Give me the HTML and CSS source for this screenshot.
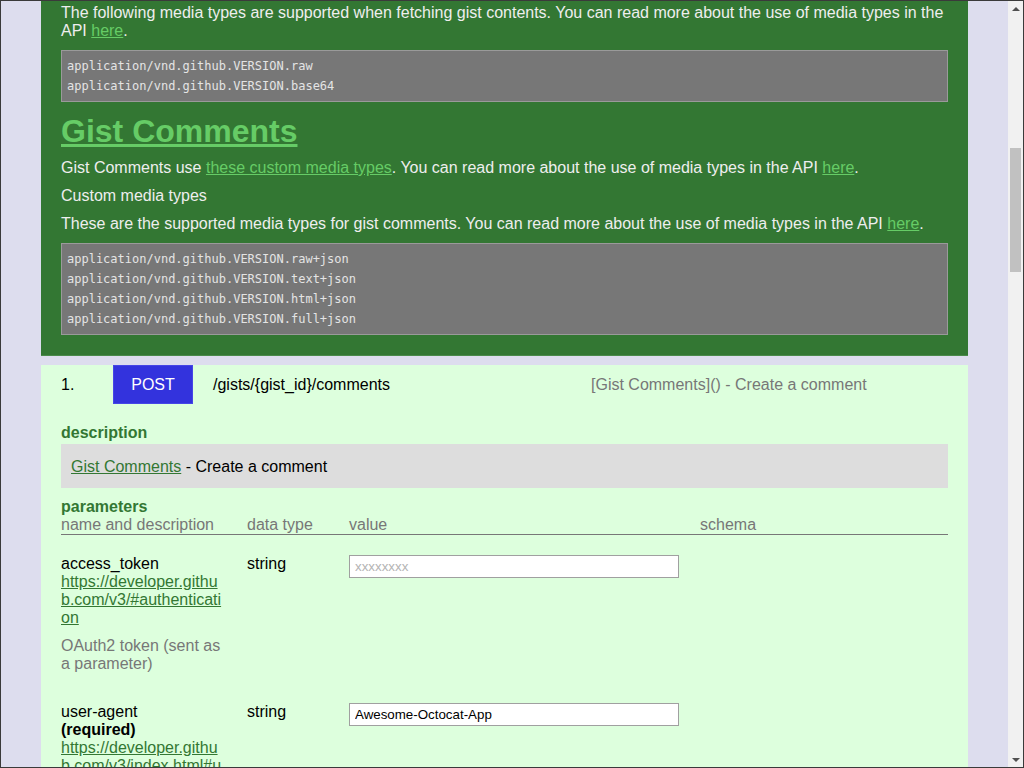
FILE: index.html
```html
<!DOCTYPE html>
<html lang="en">
<head>
<meta charset="utf-8">
<title>Gist Comments</title>
<link rel="stylesheet" href="styles.css">
</head>
<body>
<div class="page">
  <section class="media">
    <p>The following media types are supported when fetching gist contents. You can read more about the use of media types in the API <a href="#">here</a>.</p>
    <pre class="code">application/vnd.github.VERSION.raw
application/vnd.github.VERSION.base64</pre>
    <h2 class="title"><a href="#">Gist Comments</a></h2>
    <p>Gist Comments use <a href="#">these custom media types</a>. You can read more about the use of media types in the API <a href="#">here</a>.</p>
    <p>Custom media types</p>
    <p>These are the supported media types for gist comments. You can read more about the use of media types in the API <a href="#">here</a>.</p>
    <pre class="code">application/vnd.github.VERSION.raw+json
application/vnd.github.VERSION.text+json
application/vnd.github.VERSION.html+json
application/vnd.github.VERSION.full+json</pre>
  </section>

  <section class="endpoint">
    <div class="op-row">
      <span class="op-num">1.</span>
      <span class="op-method">POST</span>
      <span class="op-path">/gists/{gist_id}/comments</span>
      <span class="op-summary">[Gist Comments]() - Create a comment</span>
    </div>

    <h4 class="label">description</h4>
    <div class="desc-box"><a href="#">Gist Comments</a> - Create a comment</div>

    <h4 class="label label-params">parameters</h4>
    <div class="params">
      <div class="param-row param-head">
        <div class="cell cell-name">name and description</div>
        <div class="cell">data type</div>
        <div class="cell">value</div>
        <div class="cell">schema</div>
      </div>

      <div class="param-row">
        <div class="cell cell-name">
          <div>access_token</div>
          <a class="doc-link" href="#">https://developer.github.com/v3/#authentication</a>
          <p class="param-desc">OAuth2 token (sent as a parameter)</p>
        </div>
        <div class="cell">string</div>
        <div class="cell"><input class="field" type="text" placeholder="xxxxxxxx"></div>
        <div class="cell"></div>
      </div>

      <div class="param-row">
        <div class="cell cell-name">
          <div>user-agent</div>
          <div class="req">(required)</div>
          <a class="doc-link" href="#">https://developer.github.com/v3/index.html#user-agent-required</a>
        </div>
        <div class="cell">string</div>
        <div class="cell"><input class="field" type="text" value="Awesome-Octocat-App"></div>
        <div class="cell"></div>
      </div>
    </div>
  </section>
</div>

<div class="scrollbar" aria-hidden="true">
  <div class="sb-button"><span class="sb-arrow sb-up"></span></div>
  <div class="sb-track"><div class="sb-thumb"></div></div>
  <div class="sb-button"><span class="sb-arrow sb-down"></span></div>
</div>
</body>
</html>
```

FILE: styles.css
```css
html {
  height: 100%;
  overflow: hidden;
}

body {
  margin: 0;
  height: 100%;
  box-sizing: border-box;
  border: 1px solid #3a3a3a;
  overflow: hidden;
  background: #ddddee;
  font-family: "Liberation Sans", Arial, sans-serif;
  font-size: 16px;
  line-height: 18px;
  color: #000;
}

.page {
  margin: 0 55px 0 40px;
}

/* dark green media-types section */
.media {
  background: #337733;
  color: #eeeeee;
  padding: 3px 20px 20px;
  border-bottom: 1px solid #4a8a4a;
  margin-bottom: 9px;
}

.media p {
  margin: 0 0 10px;
}

.media a {
  color: #66cc66;
}

.code {
  margin: 0 0 11px;
  padding: 5px;
  background: #777777;
  border: 1px solid #9a9a9a;
  color: #e4e4e4;
  font-family: "DejaVu Sans Mono", "Liberation Mono", monospace;
  font-size: 12px;
  line-height: 20px;
  white-space: pre;
}

.media .code:last-child {
  margin-bottom: 0;
}

.title {
  margin: 0 0 9px;
  font-size: 32px;
  line-height: 37px;
  font-weight: bold;
}

.title a {
  color: #66cc66;
}

/* light green endpoint section */
.endpoint {
  background: #ddffdd;
  padding: 0 20px 20px;
}

.op-row {
  display: flex;
  align-items: center;
  margin-bottom: 20px;
}

.op-num {
  width: 52px;
}

.op-method {
  width: 80px;
  box-sizing: border-box;
  padding: 10px 0 9px;
  border: 1px solid #4646e6;
  background: #3333dd;
  color: #ffffff;
  text-align: center;
  margin-right: 20px;
}

.op-path {
  width: 378px;
}

.op-summary {
  color: #777777;
}

.label {
  margin: 10px 0 0;
  font-size: 16px;
  line-height: 18px;
  font-weight: bold;
  color: #337733;
}

.desc-box {
  margin-top: 2px;
  background: #dddddd;
  padding: 11px 10px 9px;
  line-height: 24px;
}

.endpoint a {
  color: #337733;
}

.param-row {
  display: grid;
  grid-template-columns: 186px 102px 351px 1fr;
}

.param-head {
  color: #777777;
  border-bottom: 1px solid #777777;
}

.param-row + .param-row {
  padding-top: 20px;
}

.cell-name {
  padding-right: 22px;
}

.doc-link {
  display: block;
  word-break: break-all;
}

.param-desc {
  margin: 10px 0;
  color: #777777;
}

.req {
  font-weight: bold;
}

.field {
  display: block;
  box-sizing: border-box;
  width: 330px;
  height: 23px;
  margin: 0;
  padding: 2px 5px;
  border: 1px solid #a0a0a0;
  background: #ffffff;
  font-family: "Liberation Sans", Arial, sans-serif;
  font-size: 13.333px;
  color: #000;
}

.field::placeholder {
  color: #b4b4b4;
}

/* window scrollbar, drawn over the page edge */
.scrollbar {
  position: fixed;
  top: 1px;
  right: 1px;
  bottom: 1px;
  width: 15px;
  background: #f1f1f1;
  display: flex;
  flex-direction: column;
}

.sb-button {
  height: 15px;
  display: flex;
  align-items: center;
  justify-content: center;
}

.sb-arrow {
  width: 0;
  height: 0;
  border-left: 4px solid transparent;
  border-right: 4px solid transparent;
}

.sb-up {
  border-bottom: 4px solid #505050;
}

.sb-down {
  border-top: 4px solid #505050;
}

.sb-track {
  flex: 1;
  padding: 0 2px;
}

.sb-thumb {
  margin-top: 132px;
  height: 124px;
  background: #c1c1c1;
}
```
